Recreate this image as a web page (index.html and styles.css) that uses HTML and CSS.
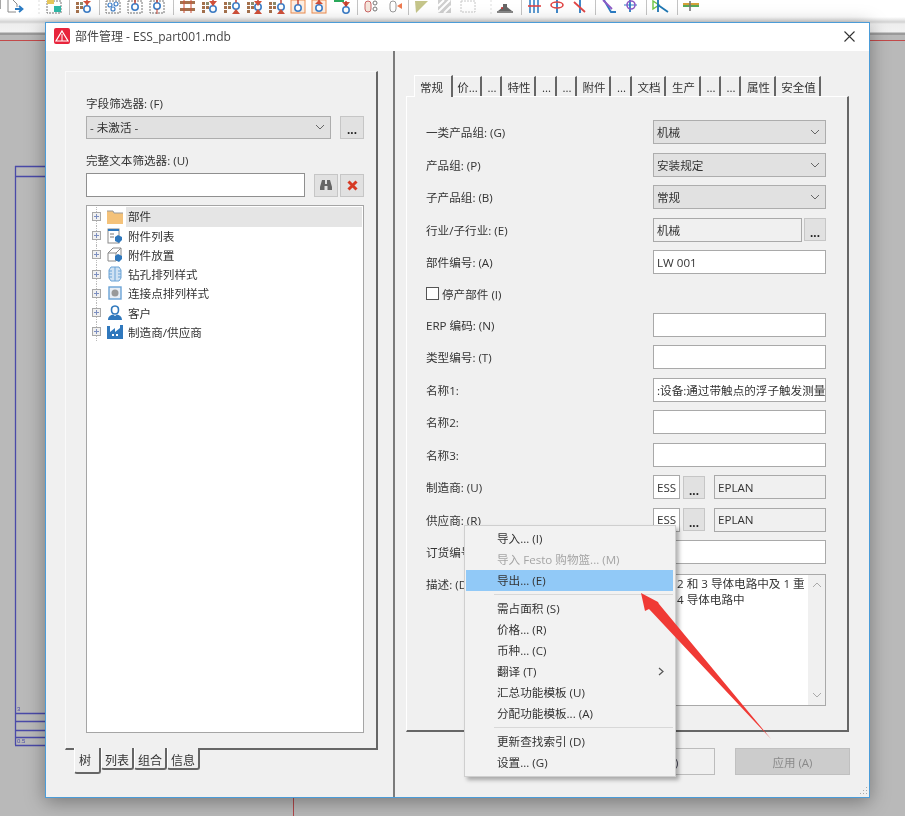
FILE: index.html
```html
<!DOCTYPE html>
<html lang="zh">
<head>
<meta charset="utf-8">
<title>部件管理</title>
<link rel="stylesheet" href="styles.css">
</head>
<body>
<div class="app">
  <svg width="0" height="0" class="defs">
    <defs>
      <g id="n"><circle cx="0" cy="9" r="3.2" fill="#fff" stroke="#3f7fc8" stroke-width="1.6"/><path d="M0 0V5.5" stroke="#c0392b" stroke-width="1.4"/></g>
      <g id="tri"><path d="M-4 3H4L0 8Z" fill="#d0503a"/></g>
      <g id="tru"><path d="M-4 14H4L0 9Z" fill="#d0503a"/></g>
      <g id="blk"><rect x="-4" y="2" width="3" height="3" fill="#a5714d"/><rect x="0" y="2" width="3" height="3" fill="#8c8c6e"/><rect x="-4" y="6" width="3" height="3" fill="#a5714d"/><rect x="0" y="6" width="3" height="3" fill="#a5714d"/><rect x="-4" y="10" width="3" height="3" fill="#a5714d"/></g>
    </defs>
  </svg>
  <header class="toolbar">
    <svg class="tools" width="905" height="17" viewBox="0 0 905 17">
      <path d="M0 0V9" stroke="#888" stroke-width="1.500"/>
      <path d="M8 0V12H16M13 0L17 4V7" fill="none" stroke="#8a8a8a"/><path d="M15 9H22M19 6L22.5 9L19 12" fill="none" stroke="#2b7cc4" stroke-width="1.8"/>
      <path d="M39 0V14" stroke="#ddd" stroke-dasharray="2 2"/>
      <rect x="47" y="1" width="14" height="12" fill="#fff" stroke="#777" stroke-dasharray="2 1"/><rect x="47" y="0" width="7" height="4" fill="#e6c65a"/><rect x="54" y="6" width="7" height="6" fill="#2fb8a8"/>
      <path d="M69.500 0V15M99.500 0V15M173.500 0V15M357.500 0V15M408.500 0V15M521.500 0V15M595.500 0V15M646.500 0V15M677.500 0V15" stroke="#c4c4c4"/>
      <use href="#blk" x="80"/><use href="#n" x="87"/><path d="M83 1H91L87 5Z" fill="#d0503a"/>
      <g fill="none" stroke="#777" stroke-dasharray="2 1"><rect x="106" y="1" width="14" height="12"/><rect x="128" y="1" width="14" height="12"/><rect x="150" y="1" width="14" height="12"/></g>
      <g fill="#fff" stroke="#3f7fc8" stroke-width="1.2"><circle cx="110" cy="5" r="2"/><circle cx="116" cy="4" r="2"/><circle cx="113" cy="9" r="2"/></g>
      <use href="#n" x="135" y="-2"/><use href="#n" x="157" y="-3"/><path d="M157 9V14" stroke="#c0392b"/>
      <g fill="#a5714d"><rect x="180" y="1" width="15" height="3"/><rect x="180" y="8" width="15" height="3"/></g><g stroke="#d0503a"><path d="M184 0V13M191 0V13"/></g>
      <use href="#blk" x="206"/><use href="#n" x="213"/><use href="#tri" x="213" y="-2"/>
      <use href="#blk" x="228"/><use href="#n" x="236" y="-3"/><use href="#tru" x="236"/>
      <use href="#blk" x="251"/><use href="#n" x="258" y="-2"/><use href="#tri" x="258" y="-2"/><use href="#tru" x="258"/>
      <use href="#blk" x="273"/><use href="#n" x="281" y="-2"/><use href="#tru" x="281"/>
      <rect x="291" y="0" width="14" height="13" fill="#fdeee2" stroke="#ee8e50"/><use href="#n" x="298" y="-1"/>
      <rect x="312" y="0" width="14" height="13" fill="#fdeee2" stroke="#ee8e50"/><use href="#n" x="319" y="-1"/><path d="M315 4H323L319 0Z" fill="#d0503a"/>
      <path d="M334 0H344V2H334Z" fill="#2aa85a"/><use href="#tri" x="346" y="-1"/><use href="#n" x="346" y="1"/>
      <rect x="365" y="1" width="6" height="11" rx="3" fill="#f5e6dc" stroke="#c66"/><circle cx="375" cy="3" r="2" fill="none" stroke="#777"/><circle cx="375" cy="9" r="2" fill="none" stroke="#777"/>
      <rect x="390" y="1" width="6" height="11" rx="3" fill="#fff" stroke="#999"/><path d="M397 6L402 3V9Z" fill="#ee7b50"/>
      <path d="M415 1H428L416 13Z" fill="#c5c58a"/><path d="M438 0H451V13H438Z" fill="#cfcfcf"/><path d="M438 6L444 0M438 12L450 0M444 13L451 6" stroke="#fff" stroke-width="2"/>
      <rect x="461" y="1" width="14" height="11" fill="none" stroke="#c8c8c8" stroke-dasharray="2 1"/>
      <path d="M491 0V15" stroke="#ddd" stroke-dasharray="2 2"/>
      <path d="M498 11L503 7V4H507V7L512 11Z" fill="#666"/><rect x="497" y="11" width="16" height="2" fill="#888"/><circle cx="502" cy="8" r="1" fill="#c33"/>
      <path d="M530 0V13M534 0V13M538 0V13" stroke="#2b7cc4" stroke-width="1.5"/><path d="M528 6H541" stroke="#e04545" stroke-width="1.6"/>
      <path d="M557 0V13" stroke="#2b7cc4" stroke-width="1.8"/><ellipse cx="557" cy="5" rx="6" ry="3" fill="none" stroke="#e04545" stroke-width="1.6"/>
      <path d="M580 0V13" stroke="#2b7cc4" stroke-width="1.8"/><path d="M574 2L585 12" stroke="#e04545" stroke-width="1.8"/>
      <path d="M604 0L611 12H616" fill="none" stroke="#2b7cc4" stroke-width="1.8"/><path d="M603 0L612 9" stroke="#8e5ac6" stroke-width="1.8"/>
      <path d="M630 0V12" stroke="#2b7cc4" stroke-width="1.8"/><path d="M624 5H637" stroke="#2b7cc4"/><circle cx="631" cy="5" r="4" fill="none" stroke="#8e5ac6" stroke-width="1.6"/>
      <path d="M653 1V9L659 5Z" fill="none" stroke="#6cc644" stroke-width="1.4"/><path d="M658 0V12M658 5L668 12" fill="none" stroke="#1f78b4" stroke-width="1.8"/>
      <path d="M683 4H699" stroke="#d5a13a" stroke-width="2"/><path d="M683 6H699" stroke="#5aa85a" stroke-width="2"/><path d="M690 1V11" stroke="#777" stroke-width="1.6"/>
    </svg>
  </header>
  <div class="strip"></div>
  <main class="canvas">
    <svg class="drawing" width="905" height="781" viewBox="0 35 905 781">
      <path d="M0 40.500H46M869 40.500H905" stroke="#c24a4a"/>
      <path d="M293.500 796V816" stroke="#b0474a"/>
      <path d="M15.500 166V745M15 166.500H46M15 176.500H46M15 713.500H46M15 721.500H46M15 730.500H46M15 737.500H46M15 745.500H46" fill="none" stroke="#4a4aa8" stroke-width="1.300"/>
      <text x="17" y="711" class="draw-txt">3</text><text x="17" y="743" class="draw-txt">0.5</text>
    </svg>

    <section class="window">
      <div class="titlebar">
        <svg class="logo" width="16" height="16" viewBox="0 0 16 16"><rect width="16" height="16" rx="2" fill="#e8243c"/><path d="M8 3L14 13H2Z" fill="none" stroke="#fff" stroke-width="1.2"/><path d="M8 6V13" stroke="#fff"/></svg>
        <span class="title">部件管理 - ESS_part001.mdb</span>
        <svg class="close" width="11" height="11" viewBox="0 0 11 11"><path d="M.5.5L10.500 10.500M10.500.5L.5 10.500" stroke="#333" stroke-width="1.1"/></svg>
      </div>
      <div class="body">
        <aside class="left">
          <div class="group">
            <div class="lbl">字段筛选器: (F)</div>
            <div class="line">
              <div class="select grow">- 未激活 -<svg class="chev" width="10" height="6" viewBox="0 0 10 6"><path d="M1 1L5 5L9 1" fill="none" stroke="#666"/></svg></div>
              <button class="btn dots gap8">...</button>
            </div>
            <div class="lbl second">完整文本筛选器: (U)</div>
            <div class="line">
              <div class="input grow"></div>
              <button class="btn gap8"><svg width="14" height="12" viewBox="0 0 14 12"><path d="M3 1H6V5H8V1H11L13 8V11H8.500V7H5.500V11H1V8Z" fill="#666"/></svg></button>
              <button class="btn gap2"><svg width="11" height="11" viewBox="0 0 11 11"><path d="M1.500 1.500L9.500 9.500M9.500 1.500L1.500 9.500" stroke="#d63a24" stroke-width="3"/></svg></button>
            </div>
            <div class="tree">
              <div class="node"><i class="exp"></i><svg width="16" height="14" viewBox="0 0 16 14"><path d="M0 1H6L7 3H16V14H0Z" fill="#f4c27a"/><path d="M0 1H6L7 3H16" fill="none" stroke="#999"/></svg><span class="sel">部件</span></div>
              <div class="node"><i class="exp"></i><svg width="16" height="16" viewBox="0 0 16 16"><rect x="1" y="1" width="11" height="14" fill="#fff" stroke="#8a8a8a"/><rect x="1" y="1" width="11" height="2" fill="#2f78bd"/><path d="M3 6H7M3 9H7" stroke="#777"/><path d="M8 9L11 7L15 9V12L12 15L8 13Z" fill="#2f78bd"/></svg><span>附件列表</span></div>
              <div class="node"><i class="exp"></i><svg width="16" height="16" viewBox="0 0 16 16"><path d="M1 6L6 1H14V9L9 14H1ZM1 6H9V14M9 6L14 1" fill="#fff" stroke="#8a8a8a"/><path d="M8 9L11 7L15 9V12L12 15L8 13Z" fill="#2f78bd"/></svg><span>附件放置</span></div>
              <div class="node"><i class="exp"></i><svg width="16" height="16" viewBox="0 0 16 16"><path d="M4 1H12L14 4V12L12 15H4L2 12V4Z" fill="#cfe2f3" stroke="#6ba3d6"/><path d="M8 1V15M2 5H5M2 8H5M2 11H5M11 5H14M11 8H14M11 11H14" stroke="#6ba3d6"/></svg><span>钻孔排列样式</span></div>
              <div class="node"><i class="exp"></i><svg width="16" height="16" viewBox="0 0 16 16"><rect x="2" y="2" width="12" height="12" fill="#e8eef5" stroke="#6ba3d6" stroke-width="1.400"/><circle cx="8" cy="8" r="3.500" fill="#999"/></svg><span>连接点排列样式</span></div>
              <div class="node"><i class="exp"></i><svg width="16" height="16" viewBox="0 0 16 16"><path d="M8 1C5 1 4.500 3 4.500 5C4.500 7 5.500 9 8 9C10.500 9 11.500 7 11.500 5C11.500 3 11 1 8 1Z" fill="none" stroke="#2f78bd" stroke-width="1.600"/><path d="M1 15C1 11 4 10 6 9.500L8 11L10 9.500C12 10 15 11 15 15Z" fill="#2f78bd"/></svg><span>客户</span></div>
              <div class="node"><i class="exp"></i><svg width="16" height="14" viewBox="0 0 16 14"><path d="M0 1H3V7L8 3V7L13 3V0H16V14H0Z" fill="#2f78bd"/><path d="M5 10H7M9 10H11" stroke="#fff" stroke-width="2"/></svg><span>制造商/供应商</span></div>
            </div>
          </div>
          <nav class="bottom-tabs">
            <span class="btab active">树</span><span class="btab">列表</span><span class="btab">组合</span><span class="btab">信息</span>
          </nav>
        </aside>
        <div class="splitter"></div>
        <div class="right">
          <nav class="tabs">
            <span class="tab active w37">常规</span><span class="tab w29">价...</span><span class="tab w20">...</span><span class="tab w34">特性</span><span class="tab w21">...</span><span class="tab w20">...</span><span class="tab w34">附件</span><span class="tab w21">...</span><span class="tab w34">文档</span><span class="tab w35">生产</span><span class="tab w20">...</span><span class="tab w20">...</span><span class="tab w35">属性</span><span class="tab w45">安全值</span>
          </nav>
          <div class="panel">
            <div class="row"><label>一类产品组: (G)</label><div class="select wide">机械<svg class="chev" width="10" height="6" viewBox="0 0 10 6"><path d="M1 1L5 5L9 1" fill="none" stroke="#666"/></svg></div></div>
            <div class="row"><label>产品组: (P)</label><div class="select wide">安装规定<svg class="chev" width="10" height="6" viewBox="0 0 10 6"><path d="M1 1L5 5L9 1" fill="none" stroke="#666"/></svg></div></div>
            <div class="row"><label>子产品组: (B)</label><div class="select wide">常规<svg class="chev" width="10" height="6" viewBox="0 0 10 6"><path d="M1 1L5 5L9 1" fill="none" stroke="#666"/></svg></div></div>
            <div class="row"><label>行业/子行业: (E)</label><div class="combo"><div class="input ro grow">机械</div><button class="btn dots small gap2">...</button></div></div>
            <div class="row"><label>部件编号: (A)</label><div class="input wide">LW 001</div></div>
            <div class="row short"><i class="check"></i><label>停产部件 (I)</label></div>
            <div class="row"><label>ERP 编码: (N)</label><div class="input wide"></div></div>
            <div class="row"><label>类型编号: (T)</label><div class="input wide"></div></div>
            <div class="row"><label>名称1:</label><div class="input wide clip">:设备:通过带触点的浮子触发测量</div></div>
            <div class="row"><label>名称2:</label><div class="input wide"></div></div>
            <div class="row"><label>名称3:</label><div class="input wide"></div></div>
            <div class="row"><label>制造商: (U)</label><div class="combo"><div class="input ess">ESS</div><button class="btn dots tiny">...</button><div class="input ro maker">EPLAN</div></div></div>
            <div class="row"><label>供应商: (R)</label><div class="combo"><div class="input ess">ESS</div><button class="btn dots tiny">...</button><div class="input ro maker">EPLAN</div></div></div>
            <div class="row"><label>订货编号: (O)</label><div class="input wide"></div></div>
            <div class="row tall"><label>描述: (D)</label>
              <div class="area">
                <div class="area-text">2 和 3 导体电路中及 1 重<br>4 导体电路中</div>
                <div class="scroll"><svg width="10" height="6" viewBox="0 0 10 6"><path d="M1 5L5 1L9 5" fill="none" stroke="#aaa"/></svg><svg width="10" height="6" viewBox="0 0 10 6"><path d="M1 1L5 5L9 1" fill="none" stroke="#aaa"/></svg></div>
              </div>
            </div>
          </div>
          <div class="actions">
            <button class="act ok">确定 (O)</button>
            <button class="act off">应用 (A)</button>
          </div>
        </div>
      </div>
      <svg class="grip" width="10" height="10" viewBox="0 0 10 10"><path d="M8 1h1v1H8zM5 4h1v1H5zM8 4h1v1H8zM2 7h1v1H2zM5 7h1v1H5zM8 7h1v1H8z" fill="#aaa"/></svg>
    </section>

    <ul class="menu">
      <li>导入... (I)</li>
      <li class="dim">导入 Festo 购物篮... (M)</li>
      <li class="hot">导出... (E)</li>
      <li class="sep"></li>
      <li>需占面积 (S)</li>
      <li>价格... (R)</li>
      <li>币种... (C)</li>
      <li class="sub">翻译 (T)<svg width="6" height="9" viewBox="0 0 6 9"><path d="M1 1L5 4.500L1 8" fill="none" stroke="#555" stroke-width="1.200"/></svg></li>
      <li>汇总功能模板 (U)</li>
      <li>分配功能模板... (A)</li>
      <li class="sep"></li>
      <li>更新查找索引 (D)</li>
      <li>设置... (G)</li>
    </ul>

    <svg class="arrow" width="140" height="155" viewBox="0 0 140 155"><path d="M5 3L22 12L23 14L135 149L13 19L9 21Z" fill="#f03a35"/></svg>
  </main>
</div>
</body>
</html>
```
FILE: styles.css
```css
* { box-sizing: border-box; }
html, body { margin: 0; padding: 0; }
body {
  font-family: "Open Sans", "Noto Sans CJK SC", sans-serif;
  font-size: 11.6px;
  color: #333;
  background: #b9b9b9;
}
.app {
  width: 905px;
  height: 816px;
  display: flex;
  flex-direction: column;
  overflow: hidden;
  position: relative;
  filter: blur(0.35px);
}
.defs { position: absolute; }
.toolbar { height: 17px; background: #fff; flex: none; }
.tools { display: block; }
.strip {
  height: 18px;
  flex: none;
  background: linear-gradient(#fff 0, #e6e6e6 3px, #d2d2d2 5px, #eeeeee 7px, #f2f2f2 15px, #9a9a9a 16px, #9a9a9a 18px);
}
.canvas { flex: 1; position: relative; background: #b9b9b9; }
.drawing { position: absolute; left: 0; top: 0; display: block; }
.draw-txt { font-size: 6px; fill: #4a4aa8; font-family: "Liberation Sans", sans-serif; }

.window {
  position: absolute;
  left: 45px;
  top: -13px;
  width: 825px;
  height: 776px;
  background: #f0f0f0;
  border: 1px solid #4b9cd8;
  box-shadow: 0 4px 18px rgba(0,0,0,.35);
  display: flex;
  flex-direction: column;
}
.titlebar {
  height: 28px;
  background: #fff;
  display: flex;
  align-items: center;
  padding: 0 14px 2px 8px;
  flex: none;
}
.title { margin-left: 5px; font-size: 12px; color: #444; flex: 1; }
.body { flex: 1; display: flex; min-height: 0; }

.left { width: 347px; padding: 20px 0 0 19px; flex: none; }
.group {
  width: 313px;
  height: 679px;
  padding: 24px 12px 15px 20px;
  border-top: 1px solid #fafafa;
  border-left: 1px solid #fafafa;
  border-right: 2px solid #666;
  border-bottom: 2px solid #666;
  display: flex;
  flex-direction: column;
}
.lbl { height: 19px; line-height: 16px; }
.second { margin-top: 14px; height: 20px; }
.line { display: flex; align-items: center; height: 24px; }
.grow { flex: 1; min-width: 0; }
.select {
  height: 23px;
  background: #e1e1e1;
  border: 1px solid #adadad;
  display: flex;
  align-items: center;
  justify-content: space-between;
  padding: 0 5px 0 3px;
}
.wide { width: 173px; height: 24px; flex: none; }
.input {
  height: 24px;
  background: #fff;
  border: 1px solid #8f8f8f;
  display: flex;
  align-items: center;
  padding: 0 3px;
  white-space: nowrap;
  overflow: hidden;
}
.panel .input { border-color: #a9a9a9; }
.ro { background: #f0f0f0; }
.btn {
  width: 24px;
  height: 23px;
  padding: 0;
  background: #e1e1e1;
  border: 1px solid #c6c6c6;
  display: flex;
  align-items: center;
  justify-content: center;
  flex: none;
  font-family: inherit;
  font-size: 11.5px;
  color: #222;
}
.dots { font-weight: 700; line-height: 1; padding-top: 6px; }
.gap8 { margin-left: 9px; }
.gap2 { margin-left: 2px; }
.tree {
  flex: 1;
  margin-top: 8px;
  background: #fff;
  border: 1px solid #a5a5a5;
  padding: 1px 1px 0 3px;
}
.node {
  height: 19.2px;
  display: flex;
  align-items: center;
  position: relative;
}
.node svg { margin: 0 3px 0 6px; flex: none; }
.node span { padding-left: 2px; }
.node::before {
  content: "";
  position: absolute;
  left: 6px;
  top: 0;
  bottom: 0;
  border-left: 1px dotted #bbb;
}
.exp {
  width: 9px;
  height: 9px;
  margin-left: 2px;
  flex: none;
  background: linear-gradient(#7d8fc0,#7d8fc0) center/5px 1px no-repeat, linear-gradient(#7d8fc0,#7d8fc0) center/1px 5px no-repeat, #f0f0f0;
  border: 1px solid #a8a8a8;
  position: relative;
  z-index: 1;
}
.node .sel { background: #e5e5e5; flex: 1; height: 20px; line-height: 20px; }

.bottom-tabs { display: flex; margin: -2px 0 0 9px; align-items: flex-start; }
.btab {
  height: 22px;
  padding: 0 3px;
  line-height: 26px;
  font-size: 12px;
  background: #f0f0f0;
  border-right: 2px solid #666;
  border-bottom: 2px solid #666;
  border-left: 1px solid #fff;
  border-radius: 0 0 3px 3px;
}
.btab.active {
  width: 27px;
  height: 26px;
  padding: 0 0 0 4px;
  position: relative;
  z-index: 1;
}

.splitter { width: 2px; background: #7b7b7b; flex: none; }
.right { flex: 1; min-width: 0; padding: 24px 0 0 11px; display: flex; flex-direction: column; }
.tabs { display: flex; height: 21px; padding-left: 8px; align-items: flex-end; position: relative; z-index: 1; }
.tab {
  height: 20px;
  line-height: 21px;
  padding-left: 2px;
  border-right: 2px solid #666;
  border-top: 1px solid #fff;
  text-align: center;
  white-space: nowrap;
  font-size: 11.5px;
  flex: none;
}
.tab.active { height: 22px; background: #f0f0f0; margin-bottom: -1px; border-left: 1px solid #fff; line-height: 23px; padding: 0 3px 0 0; }
.w37 { width: 39px; } .w29 { width: 29px; } .w20 { width: 20px; } .w21 { width: 21px; }
.w34 { width: 34px; } .w35 { width: 35px; } .w45 { width: 45px; }
.panel {
  width: 443px;
  height: 636px;
  padding: 19px 21px 0 19px;
  border-top: 1px solid #fff;
  border-left: 1px solid #fff;
  border-right: 2px solid #666;
  border-bottom: 2px solid #666;
}
.row { height: 32.5px; display: flex; align-items: center; }
.row label { flex: 1; }
.row.short { height: 30px; }
.row.short label { margin-left: 3px; }
.check { width: 13px; height: 13px; border: 1px solid #555; background: #fff; flex: none; }
.combo { width: 173px; display: flex; align-items: center; flex: none; }
.small { width: 22px; height: 23px; }
.tiny { width: 22px; height: 23px; margin-left: 3px; }
.ess { width: 27px; flex: none; }
.maker { width: 112px; margin-left: 9px; flex: none; }
.clip { justify-content: flex-start; }
.row.tall { height: 133px; align-items: flex-start; margin-top: 5px; }
.row.tall label { padding-top: 2px; }
.area {
  width: 173px;
  height: 132px;
  background: #fff;
  border: 1px solid #a9a9a9;
  display: flex;
  flex: none;
}
.area-text { flex: 1; padding: 1px 0 0 23px; line-height: 16px; white-space: nowrap; overflow: hidden; }
.scroll { width: 17px; flex: none; background: #f0f0f0; display: flex; flex-direction: column; justify-content: space-between; align-items: center; padding: 7px 0; }

.actions { display: flex; justify-content: flex-end; gap: 20px; padding: 16px 18px 0 0; width: 462px; }
.act { width: 115px; height: 27px; font-family: inherit; font-size: 11.5px; padding: 0; }
.ok { background: #f0f0f0; border: 1px solid #bcbcbc; color: #445; }
.off { background: #cccccc; border: 1px solid #c0c0c0; color: #8a8a8a; }
.grip { position: absolute; right: 1px; bottom: 1px; }

.menu {
  position: absolute;
  left: 464px;
  top: 490px;
  width: 212px;
  height: 252px;
  margin: 0;
  padding: 2px 2px 2px 1px;
  list-style: none;
  background: #f2f2f2;
  border: 1px solid #cfcfcf;
  box-shadow: 3px 3px 4px rgba(0,0,0,.3);
}
.menu li { height: 21px; line-height: 21px; padding-left: 31px; }
.menu .dim { color: #a5a5a5; }
.menu .hot { background: #91c9f7; }
.menu .sep { height: 7px; margin-left: 28px; position: relative; }
.menu .sep::after { content: ""; position: absolute; left: 0; right: 0; top: 3px; height: 1px; background: #d8d8d8; }
.menu .sub { display: flex; align-items: center; justify-content: space-between; padding-right: 9px; }
.arrow { position: absolute; left: 636px; top: 555px; pointer-events: none; }
```
